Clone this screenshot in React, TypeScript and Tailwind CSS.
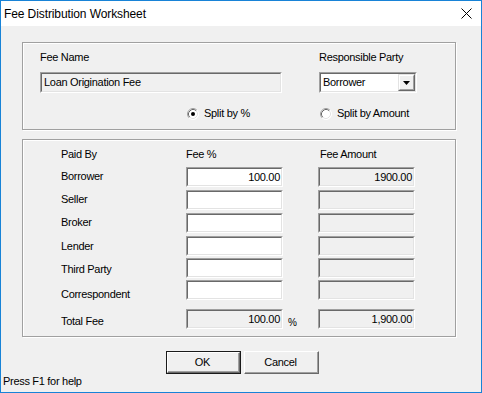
import React from 'react';

// sunken 3D edit box, like a classic Win32 EDIT control
function Field({
    value = '',
    disabled = false,
    right = false,
    className = '',
}: {
    value?: string;
    disabled?: boolean;
    right?: boolean;
    className?: string;
}) {
    return (
        <div className={`border border-t-[#a0a0a0] border-l-[#a0a0a0] border-b-white border-r-white ${className}`}>
            <div
                className={`h-full border border-t-[#696969] border-l-[#696969] border-b-[#e3e3e3] border-r-[#e3e3e3] flex items-center ${
                    disabled ? 'bg-[#f0f0f0]' : 'bg-white'
                } ${right ? 'justify-end pr-[1px]' : 'pl-[2px]'}`}
            >
                <span className="leading-[13px] whitespace-nowrap">{value}</span>
            </div>
        </div>
    );
}

function Radio({ checked, label }: { checked?: boolean; label: string }) {
    return (
        <div className="flex items-center gap-[5px] h-[13px]">
            <svg width="12" height="12" viewBox="0 0 12 12">
                <circle cx="6" cy="6" r="5.5" fill="#ffffff" />
                <path d="M2.11 9.89 A5.5 5.5 0 0 1 9.89 2.11" stroke="#a0a0a0" fill="none" />
                <path d="M9.89 2.11 A5.5 5.5 0 0 1 2.11 9.89" stroke="#ffffff" fill="none" />
                <path d="M2.82 9.18 A4.5 4.5 0 0 1 9.18 2.82" stroke="#696969" fill="none" />
                <path d="M9.18 2.82 A4.5 4.5 0 0 1 2.82 9.18" stroke="#e3e3e3" fill="none" />
                {checked && <circle cx="6" cy="6" r="2" fill="#000000" />}
            </svg>
            <span className="leading-[13px]">{label}</span>
        </div>
    );
}

const rows = [
    { label: 'Borrower', pct: '100.00', amt: '1900.00', off: 'mt-[3px]', gap: 'mt-[6px]' },
    { label: 'Seller', pct: '', amt: '', off: 'mt-[3px]', gap: 'mt-[3px]' },
    { label: 'Broker', pct: '', amt: '', off: 'mt-[3px]', gap: 'mt-[3px]' },
    { label: 'Lender', pct: '', amt: '', off: 'mt-[4px]', gap: 'mt-[3px]' },
    { label: 'Third Party', pct: '', amt: '', off: 'mt-[5px]', gap: 'mt-[2px]' },
    { label: 'Correspondent', pct: '', amt: '', off: 'mt-[8px]', gap: 'mt-[2px]' },
];

export default function App() {
    return (
        <div
            className="w-[482px] h-[393px] border border-[#1883d7] flex flex-col bg-[#f0f0f0] text-[11px] tracking-[-0.3px] text-black overflow-hidden"
            style={{ fontFamily: '"Liberation Sans", Arial, sans-serif' }}
        >
            {/* Title bar */}
            <div className="h-[25px] bg-white flex items-center justify-between pl-[3px] pr-[9px] shrink-0">
                <span className="text-[12px] leading-[14px] tracking-[-0.1px]">Fee Distribution Worksheet</span>
                <svg width="11" height="11" viewBox="0 0 11 11">
                    <path d="M0.5 0.5 L10.5 10.5 M10.5 0.5 L0.5 10.5" stroke="#000" strokeWidth="1" />
                </svg>
            </div>

            {/* Group 1 */}
            <div className="mt-[16px] ml-[21px] w-[434px] h-[88px] border border-[#a0a0a0] shadow-[inset_1px_1px_0_#fff,1px_1px_0_#fff] pl-[17px] pt-[8px] shrink-0">
                <div className="flex gap-[37px]">
                    <div className="w-[242px] flex flex-col">
                        <span className="leading-[13px] h-[13px]">Fee Name</span>
                        <Field value="Loan Origination Fee" disabled className="mt-[8px] h-[21px]" />
                        <div className="mt-[14px] ml-[147px]">
                            <Radio checked label="Split by %" />
                        </div>
                    </div>
                    <div className="w-[98px] flex flex-col">
                        <span className="leading-[13px] h-[13px] whitespace-nowrap">Responsible Party</span>
                        <div className="mt-[8px] h-[21px] border border-t-[#a0a0a0] border-l-[#a0a0a0] border-b-white border-r-white">
                            <div className="h-full border border-t-[#696969] border-l-[#696969] border-b-[#e3e3e3] border-r-[#e3e3e3] bg-white flex items-center justify-between pl-[2px]">
                                <span className="leading-[13px]">Borrower</span>
                                <div className="w-[17px] h-[17px] border border-t-[#e3e3e3] border-l-[#e3e3e3] border-b-[#696969] border-r-[#696969]">
                                    <div className="h-full border border-t-white border-l-white border-b-[#a0a0a0] border-r-[#a0a0a0] bg-[#f0f0f0] flex items-center justify-center">
                                        <svg width="7" height="4" viewBox="0 0 7 4">
                                            <path d="M0 0 H7 L3.5 4 Z" fill="#000" />
                                        </svg>
                                    </div>
                                </div>
                            </div>
                        </div>
                        <div className="mt-[14px] ml-[1px] whitespace-nowrap">
                            <Radio label="Split by Amount" />
                        </div>
                    </div>
                </div>
            </div>

            {/* Group 2 */}
            <div className="mt-[9px] ml-[21px] w-[434px] h-[198px] border border-[#a0a0a0] shadow-[inset_1px_1px_0_#fff,1px_1px_0_#fff] pl-[38px] pt-[8px] shrink-0">
                <div className="flex h-[13px] leading-[13px]">
                    <span className="w-[125px]">Paid By</span>
                    <span className="w-[133px]">Fee %</span>
                    <span className="pl-[1px]">Fee Amount</span>
                </div>
                {rows.map((r) => (
                    <div key={r.label} className={`flex items-start h-[20px] ${r.gap}`}>
                        <span className={`w-[125px] leading-[13px] ${r.off}`}>{r.label}</span>
                        <Field value={r.pct} right className="w-[97px] h-[20px]" />
                        <Field value={r.amt} right disabled className="ml-[35px] w-[97px] h-[20px]" />
                    </div>
                ))}
                <div className="flex items-start h-[20px] mt-[9px]">
                    <span className="w-[125px] leading-[13px] mt-[6px]">Total Fee</span>
                    <Field value="100.00" right disabled className="w-[97px] h-[20px]" />
                    <span className="w-[35px] pl-[5px] leading-[13px] mt-[7px] text-[10px]">%</span>
                    <Field value="1,900.00" right disabled className="w-[97px] h-[20px]" />
                </div>
            </div>

            {/* Buttons */}
            <div className="mt-[14px] flex justify-center gap-[3px] shrink-0 pl-[2px]">
                <div className="w-[75px] h-[23px] border border-[#1a1a1a]">
                    <div className="h-full border border-t-white border-l-white border-b-[#696969] border-r-[#696969]">
                        <div className="h-full border-b border-r border-b-[#a0a0a0] border-r-[#a0a0a0] bg-[#f0f0f0] flex items-center justify-center">
                            OK
                        </div>
                    </div>
                </div>
                <div className="w-[75px] h-[23px] border border-t-white border-l-white border-b-[#696969] border-r-[#696969]">
                    <div className="h-full border-b border-r border-b-[#a0a0a0] border-r-[#a0a0a0] bg-[#f0f0f0] flex items-center justify-center">
                        Cancel
                    </div>
                </div>
            </div>

            {/* Status bar */}
            <div className="pl-[2px] mt-[1px] leading-[13px]">Press F1 for help</div>
        </div>
    );
}
